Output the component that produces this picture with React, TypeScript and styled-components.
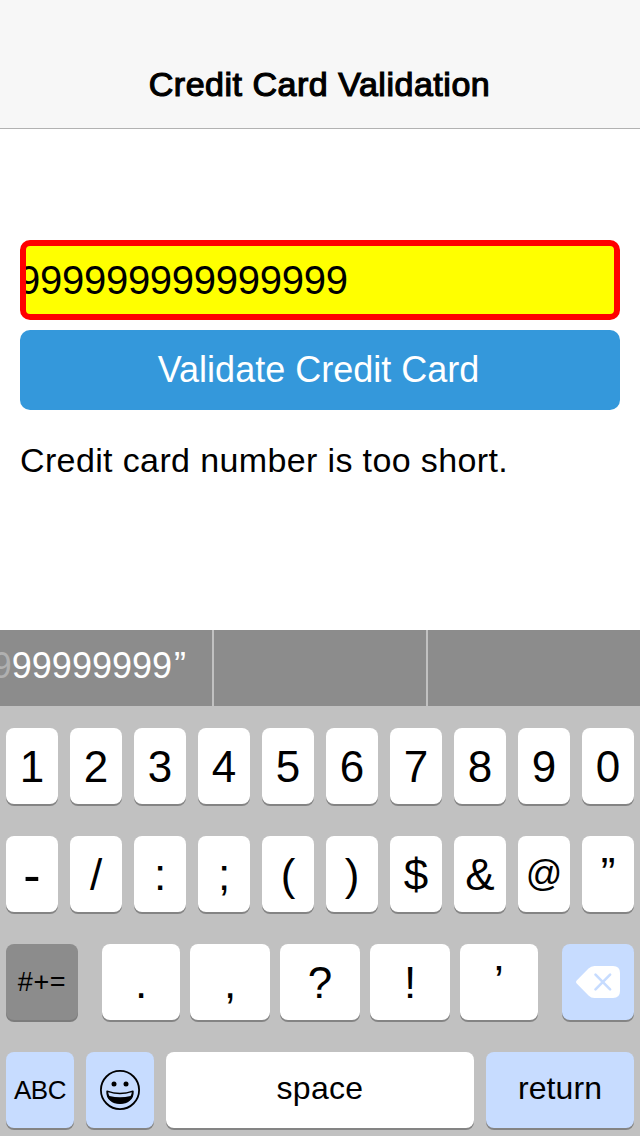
import React from "react";
import styled, { createGlobalStyle } from "styled-components";

const GlobalStyle = createGlobalStyle`
  *, *::before, *::after { box-sizing: border-box; }
  body {
    margin: 0;
    background: #fff;
    font-family: "Liberation Sans", Arial, sans-serif;
    color: #000;
  }
  button, input { font-family: inherit; color: inherit; margin: 0; padding: 0; border: 0; }
`;

const Screen = styled.div`
  width: 640px;
  height: 1136px;
  display: flex;
  flex-direction: column;
  overflow: hidden;
  background: #fff;
`;

const NavBar = styled.header`
  height: 129px;
  padding: 40px 1px 0 0;
  display: flex;
  align-items: center;
  justify-content: center;
  background: #f7f7f7;
  border-bottom: 1px solid #b2b2b2;
`;

const Title = styled.h1`
  margin: 0;
  font-size: 34px;
  line-height: 40px;
  font-weight: 400;
  letter-spacing: 0.52px;
  -webkit-text-stroke: 1.2px #000;
`;

const Form = styled.main`
  flex: 1;
  padding: 111px 20px 0;
  display: flex;
  flex-direction: column;
`;

const Field = styled.div`
  height: 80px;
  border: 6px solid #f00;
  border-radius: 10px;
  background: #ff0;
  overflow: hidden;
  display: flex;
  align-items: center;
`;

const FieldValue = styled.span`
  margin-left: -8px;
  font-size: 40px;
  line-height: 48px;
  letter-spacing: -0.27px;
  white-space: nowrap;
`;

const SubmitButton = styled.button`
  height: 80px;
  margin-top: 10px;
  border-radius: 10px;
  background: #3498db;
  color: #fff;
  font-size: 36px;
  letter-spacing: 0;
  padding-right: 3px;
`;

const Message = styled.p`
  margin: 30px 0 0;
  font-size: 34px;
  line-height: 40px;
  letter-spacing: 0.37px;
  white-space: nowrap;
`;

const Keyboard = styled.section`
  height: 506px;
  background: #c1c1c1;
`;

const Suggestions = styled.div`
  height: 76px;
  display: grid;
  grid-template-columns: 212px 212px 212px;
  gap: 2px;
`;

const Suggestion = styled.div`
  background: #8c8c8c;
  color: #fff;
  display: flex;
  align-items: center;
  justify-content: flex-end;
  overflow: hidden;
  padding: 0 26px 5px 0;
  font-size: 36px;
  line-height: 44px;
  white-space: nowrap;

  &:last-child { width: 214px; }
`;

const Faded = styled.span`
  color: #b0b0b0;
`;

const ClosingQuote = styled.span`
  margin-left: 2px;
`;

const Keys = styled.div`
  padding: 22px 6px 0;
  display: flex;
  flex-direction: column;
  gap: 32px;
`;

const KeyRow = styled.div`
  display: flex;
  justify-content: space-between;
`;

const KeyGroup = styled.div`
  display: flex;
  gap: 10px;
`;

type Tone = "light" | "blue" | "dark";
const tones: Record<Tone, string> = { light: "#fff", blue: "#c7dcff", dark: "#8c8c8c" };

const Key = styled.button<{ $w?: number; $tone?: Tone; $size?: number; $lift?: number; $track?: number }>`
  width: ${(p) => p.$w ?? 52}px;
  height: 76px;
  border-radius: 8px;
  background: ${(p) => tones[p.$tone ?? "light"]};
  box-shadow: 0 2px 0 ${(p) => (p.$tone === "dark" ? "#7c7c7c" : "#848484")};
  display: flex;
  align-items: center;
  justify-content: center;
  font-size: ${(p) => p.$size ?? 44}px;
  line-height: 50px;
  letter-spacing: ${(p) => p.$track ?? 0}px;
  padding-bottom: ${(p) => Math.max(0, (p.$lift ?? 0) * 2)}px;
  padding-top: ${(p) => Math.max(0, (p.$lift ?? 0) * -2)}px;
`;

const DeleteIcon = () => (
  <svg width="44" height="32" viewBox="0 0 44 32">
    <path
      d="M.7 14.6 12.500 2.600Q15 0 18.500 0H37q7 0 7 7v18q0 7-7 7H18.500q-3.500 0-6-2.600L.7 17.400q-1.300-1.400 0-2.800z"
      fill="#fff"
    />
    <path d="M19.500 8.700l14.600 14.600M34.100 8.700 19.500 23.300" stroke="#c7dcff" strokeWidth="2.600" strokeLinecap="round" />
  </svg>
);

const EmojiIcon = () => (
  <svg width="40" height="40" viewBox="0 0 40 40">
    <circle cx="20" cy="20" r="19.100" fill="none" stroke="#000" strokeWidth="1.800" />
    <circle cx="14" cy="14" r="2.500" />
    <circle cx="26" cy="14" r="2.500" />
    <path
      d="M7 21.200Q20 25.700 33 21.200C33.400 29.200 27.200 33.400 20 33.400S6.600 29.200 7 21.200z"
      stroke="#000"
      strokeWidth="1.400"
      strokeLinejoin="round"
    />
    <path d="M8.200 22.300Q20 26 31.800 22.300Q31.600 24.600 30.600 26Q20 28.600 9.400 26Q8.400 24.600 8.200 22.300z" fill="#c7dcff" />
  </svg>
);

const digits = ["1", "2", "3", "4", "5", "6", "7", "8", "9", "0"];
const symbols: { char: string; size?: number; lift?: number }[] = [
  { char: "-", size: 52, lift: -1 },
  { char: "/" },
  { char: ":" },
  { char: ";" },
  { char: "(" },
  { char: ")" },
  { char: "$" },
  { char: "&" },
  { char: "@", size: 36, lift: 0 },
  { char: "”", size: 44, lift: 0 },
];
const punctuation: [string, number][] = [[".", 78], [",", 80], ["?", 80], ["!", 80], ["’", 78]];

export default function App() {
  return (
    <Screen>
      <GlobalStyle />
      <NavBar>
        <Title>Credit Card Validation</Title>
      </NavBar>
      <Form>
        <Field>
          <FieldValue>999999999999999</FieldValue>
        </Field>
        <SubmitButton>Validate Credit Card</SubmitButton>
        <Message>Credit card number is too short.</Message>
      </Form>
      <Keyboard>
        <Suggestions>
          <Suggestion>
            <Faded>9</Faded>99999999<ClosingQuote>”</ClosingQuote>
          </Suggestion>
          <Suggestion />
          <Suggestion />
        </Suggestions>
        <Keys>
          <KeyRow>
            {digits.map((d) => (
              <Key key={d} $lift={-1}>{d}</Key>
            ))}
          </KeyRow>
          <KeyRow>
            {symbols.map((s) => (
              <Key key={s.char} $size={s.size} $lift={s.lift ?? -1}>{s.char}</Key>
            ))}
          </KeyRow>
          <KeyRow>
            <Key $w={72} $tone="dark" $size={27} $track={0.6}>#+=</Key>
            <KeyGroup>
              {punctuation.map(([c, w]) => (
                <Key key={c} $w={w} $lift={c === "’" ? 0 : -1}>{c}</Key>
              ))}
            </KeyGroup>
            <Key $w={72} $tone="blue"><DeleteIcon /></Key>
          </KeyRow>
          <KeyRow>
            <Key $w={68} $tone="blue" $size={26} $track={-0.5}>ABC</Key>
            <Key $w={68} $tone="blue"><EmojiIcon /></Key>
            <Key $w={308} $size={32} $lift={2} $track={0.3}>space</Key>
            <Key $w={148} $tone="blue" $size={32} $lift={2} $track={0.1}>return</Key>
          </KeyRow>
        </Keys>
      </Keyboard>
    </Screen>
  );
}
